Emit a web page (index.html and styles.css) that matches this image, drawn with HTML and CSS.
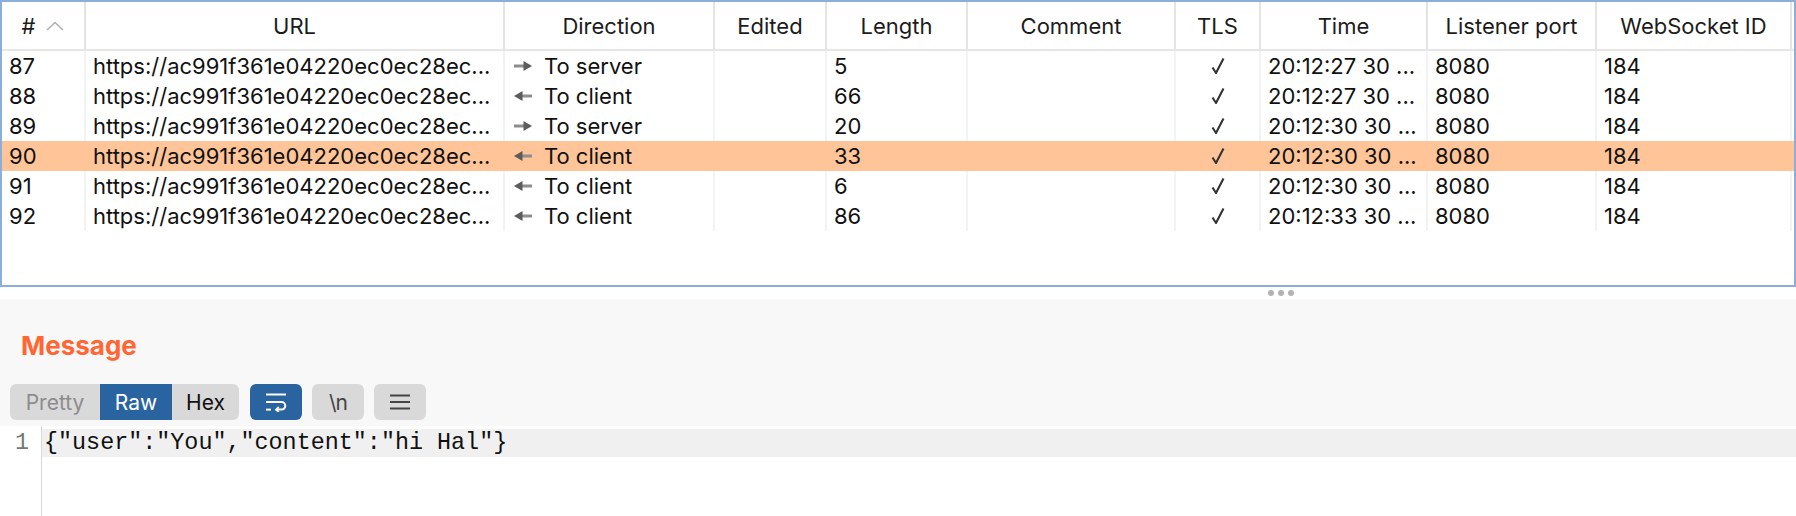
FILE: index.html
```html
<!DOCTYPE html>
<html>
<head>
<meta charset="utf-8">
<link rel="stylesheet" href="styles.css">
</head>
<body>
<div class="app">
  <div class="table">
    <div class="row head">
      <div class="cell num-head"><span>#</span><svg class="sort" width="18" height="10" viewBox="0 0 18 10"><path d="M1 9 L9 1.5 L17 9" fill="none" stroke="#b0b0b0" stroke-width="1.6"/></svg></div>
      <div class="cell">URL</div>
      <div class="cell">Direction</div>
      <div class="cell">Edited</div>
      <div class="cell">Length</div>
      <div class="cell">Comment</div>
      <div class="cell">TLS</div>
      <div class="cell">Time</div>
      <div class="cell">Listener port</div>
      <div class="cell">WebSocket ID</div>
      <div class="cell filler"></div>
    </div>

    <div class="row">
      <div class="cell">87</div>
      <div class="cell">https://ac991f361e04220ec0ec28ec...</div>
      <div class="cell dir"><svg class="arrow" width="20" height="12" viewBox="0 0 20 12"><rect x="1" y="4.5" width="11" height="3" fill="#8d8d8d"/><path d="M10.5 1 L19 6 L10.5 11 Z" fill="#5c5c5c"/></svg>To server</div>
      <div class="cell"></div>
      <div class="cell">5</div>
      <div class="cell"></div>
      <div class="cell tls"><svg width="14" height="18" viewBox="0 0 14 18"><path d="M1.5 10.5 L5 16 L12.5 1.5" fill="none" stroke="#333" stroke-width="2.1" stroke-linejoin="round"/></svg></div>
      <div class="cell">20:12:27 30 ...</div>
      <div class="cell">8080</div>
      <div class="cell">184</div>
      <div class="cell filler"></div>
    </div>

    <div class="row">
      <div class="cell">88</div>
      <div class="cell">https://ac991f361e04220ec0ec28ec...</div>
      <div class="cell dir"><svg class="arrow" width="20" height="12" viewBox="0 0 20 12"><rect x="8" y="4.5" width="11" height="3" fill="#8d8d8d"/><path d="M9.5 1 L1 6 L9.5 11 Z" fill="#5c5c5c"/></svg>To client</div>
      <div class="cell"></div>
      <div class="cell">66</div>
      <div class="cell"></div>
      <div class="cell tls"><svg width="14" height="18" viewBox="0 0 14 18"><path d="M1.5 10.5 L5 16 L12.5 1.5" fill="none" stroke="#333" stroke-width="2.1" stroke-linejoin="round"/></svg></div>
      <div class="cell">20:12:27 30 ...</div>
      <div class="cell">8080</div>
      <div class="cell">184</div>
      <div class="cell filler"></div>
    </div>

    <div class="row">
      <div class="cell">89</div>
      <div class="cell">https://ac991f361e04220ec0ec28ec...</div>
      <div class="cell dir"><svg class="arrow" width="20" height="12" viewBox="0 0 20 12"><rect x="1" y="4.5" width="11" height="3" fill="#8d8d8d"/><path d="M10.5 1 L19 6 L10.5 11 Z" fill="#5c5c5c"/></svg>To server</div>
      <div class="cell"></div>
      <div class="cell">20</div>
      <div class="cell"></div>
      <div class="cell tls"><svg width="14" height="18" viewBox="0 0 14 18"><path d="M1.5 10.5 L5 16 L12.5 1.5" fill="none" stroke="#333" stroke-width="2.1" stroke-linejoin="round"/></svg></div>
      <div class="cell">20:12:30 30 ...</div>
      <div class="cell">8080</div>
      <div class="cell">184</div>
      <div class="cell filler"></div>
    </div>

    <div class="row selected">
      <div class="cell">90</div>
      <div class="cell">https://ac991f361e04220ec0ec28ec...</div>
      <div class="cell dir"><svg class="arrow" width="20" height="12" viewBox="0 0 20 12"><rect x="8" y="4.5" width="11" height="3" fill="#8d8d8d"/><path d="M9.5 1 L1 6 L9.5 11 Z" fill="#5c5c5c"/></svg>To client</div>
      <div class="cell"></div>
      <div class="cell">33</div>
      <div class="cell"></div>
      <div class="cell tls"><svg width="14" height="18" viewBox="0 0 14 18"><path d="M1.5 10.5 L5 16 L12.5 1.5" fill="none" stroke="#333" stroke-width="2.1" stroke-linejoin="round"/></svg></div>
      <div class="cell">20:12:30 30 ...</div>
      <div class="cell">8080</div>
      <div class="cell">184</div>
      <div class="cell filler"></div>
    </div>

    <div class="row">
      <div class="cell">91</div>
      <div class="cell">https://ac991f361e04220ec0ec28ec...</div>
      <div class="cell dir"><svg class="arrow" width="20" height="12" viewBox="0 0 20 12"><rect x="8" y="4.5" width="11" height="3" fill="#8d8d8d"/><path d="M9.5 1 L1 6 L9.5 11 Z" fill="#5c5c5c"/></svg>To client</div>
      <div class="cell"></div>
      <div class="cell">6</div>
      <div class="cell"></div>
      <div class="cell tls"><svg width="14" height="18" viewBox="0 0 14 18"><path d="M1.5 10.5 L5 16 L12.5 1.5" fill="none" stroke="#333" stroke-width="2.1" stroke-linejoin="round"/></svg></div>
      <div class="cell">20:12:30 30 ...</div>
      <div class="cell">8080</div>
      <div class="cell">184</div>
      <div class="cell filler"></div>
    </div>

    <div class="row">
      <div class="cell">92</div>
      <div class="cell">https://ac991f361e04220ec0ec28ec...</div>
      <div class="cell dir"><svg class="arrow" width="20" height="12" viewBox="0 0 20 12"><rect x="8" y="4.5" width="11" height="3" fill="#8d8d8d"/><path d="M9.5 1 L1 6 L9.5 11 Z" fill="#5c5c5c"/></svg>To client</div>
      <div class="cell"></div>
      <div class="cell">86</div>
      <div class="cell"></div>
      <div class="cell tls"><svg width="14" height="18" viewBox="0 0 14 18"><path d="M1.5 10.5 L5 16 L12.5 1.5" fill="none" stroke="#333" stroke-width="2.1" stroke-linejoin="round"/></svg></div>
      <div class="cell">20:12:33 30 ...</div>
      <div class="cell">8080</div>
      <div class="cell">184</div>
      <div class="cell filler"></div>
    </div>
  </div>

  <div class="splitter"><span class="dot"></span><span class="dot"></span><span class="dot"></span></div>

  <div class="panel">
    <h2 class="title">Message</h2>
    <div class="toolbar">
      <div class="seg">
        <span class="seg-item pretty">Pretty</span>
        <span class="seg-item raw">Raw</span>
        <span class="seg-item hex">Hex</span>
      </div>
      <span class="tbtn active"><svg width="24" height="20" viewBox="0 0 24 20"><path d="M2 2.5 H22" stroke="#fff" stroke-width="2" fill="none"/><path d="M2 10 H17.5 a3.8 3.8 0 0 1 0 7.6 H12.5" stroke="#fff" stroke-width="2" fill="none"/><path d="M14.8 15 L12 17.6 L14.8 20" stroke="#fff" stroke-width="1.8" fill="none"/><path d="M2 17.6 H7" stroke="#fff" stroke-width="2" fill="none"/></svg></span>
      <span class="tbtn nl">\n</span>
      <span class="tbtn"><svg width="24" height="20" viewBox="0 0 24 20"><path d="M2 3.5 H22 M2 10 H22 M2 16.5 H22" stroke="#444" stroke-width="2" fill="none"/></svg></span>
    </div>
  </div>

  <div class="editor">
    <div class="gutter"><div class="ln">1</div></div>
    <div class="code"><div class="line">{"user":"You","content":"hi Hal"}</div></div>
  </div>
</div>
</body>
</html>
```

FILE: styles.css
```css
html, body {
  margin: 0;
  padding: 0;
  background: #ffffff;
}

body {
  font-family: Inter, "Liberation Sans", Arial, sans-serif;
  font-size: 22px;
  color: #111;
  width: 1796px;
  height: 516px;
  overflow: hidden;
}

.app {
  display: flex;
  flex-direction: column;
  height: 516px;
}

/* ---------- table ---------- */
.table {
  box-sizing: border-box;
  height: 287px;
  border: 2px solid #8bafda;
  background: #fff;
  display: flex;
  flex-direction: column;
}

.row {
  display: grid;
  grid-template-columns: 84px 419px 210px 112px 141px 208px 85px 167px 169px 195px 1fr;
  height: 30px;
}

.row.head {
  height: 49px;
  box-sizing: border-box;
  border-bottom: 2px solid #e6e6e6;
}

.cell {
  box-sizing: border-box;
  border-right: 2px solid #f3f3f3;
  padding-left: 7px;
  display: flex;
  align-items: center;
  white-space: nowrap;
  overflow: hidden;
}

.head .cell {
  border-right-color: #e4e4e4;
  justify-content: center;
  padding-left: 0;
  color: #1c1c1c;
}

.cell.filler {
  border-right: none;
}

.num-head span {
  margin-right: 11px;
}

.sort {
  display: block;
  margin-top: 1px;
}

.dir .arrow {
  margin-left: 1px;
  margin-right: 11px;
  flex: none;
}

.tls {
  justify-content: center;
  padding-left: 0;
}

.row.selected {
  background: #ffc497;
}

.row.selected .cell {
  border-right-color: transparent;
}

/* ---------- splitter ---------- */
.splitter {
  height: 12px;
  background: #fff;
  display: flex;
  align-items: center;
  gap: 4px;
  padding-left: 1268px;
}

.dot {
  width: 6px;
  height: 6px;
  border-radius: 50%;
  background: #b3b3b3;
}

/* ---------- message panel ---------- */
.panel {
  background: #f8f8f8;
  padding: 31px 0 6px 10px;
  font-size: 21px;
}

.title {
  margin: 0 0 22px 11px;
  font-size: 26px;
  line-height: 32px;
  font-weight: 700;
  color: #ff6633;
}

.toolbar {
  display: flex;
  align-items: center;
  gap: 11px;
  height: 36px;
}

.seg {
  display: flex;
  height: 36px;
  border-radius: 6px;
  background: #d9d9d9;
  overflow: hidden;
}

.seg-item {
  display: flex;
  align-items: center;
  justify-content: center;
  height: 36px;
}

.seg-item.pretty {
  width: 90px;
  color: #8c8c8c;
}

.seg-item.raw {
  width: 72px;
  background: #2a64a0;
  color: #fff;
}

.seg-item.hex {
  width: 67px;
  color: #111;
}

.tbtn {
  width: 52px;
  height: 36px;
  border-radius: 6px;
  background: #d9d9d9;
  display: flex;
  align-items: center;
  justify-content: center;
  color: #444;
}

.tbtn.active {
  background: #2a64a0;
}

.tbtn + .tbtn {
  margin-left: -1px;
}

.tbtn.nl {
  font-size: 21px;
  letter-spacing: -1px;
}

/* ---------- editor ---------- */
.editor {
  flex: 1;
  display: flex;
  background: #fff;
  font-family: "Liberation Mono", "DejaVu Sans Mono", monospace;
  font-size: 23.4px;
}

.gutter {
  width: 42px;
  box-sizing: border-box;
  border-right: 1px solid #d9d9d9;
  padding-top: 3px;
  padding-right: 12px;
  text-align: right;
  color: #777;
}

.ln {
  height: 28px;
  line-height: 28px;
}

.code {
  flex: 1;
  padding-top: 3px;
}

.line {
  height: 28px;
  line-height: 28px;
  background: #f0f0f0;
  padding-left: 2px;
  color: #111;
  white-space: pre;
}
```
